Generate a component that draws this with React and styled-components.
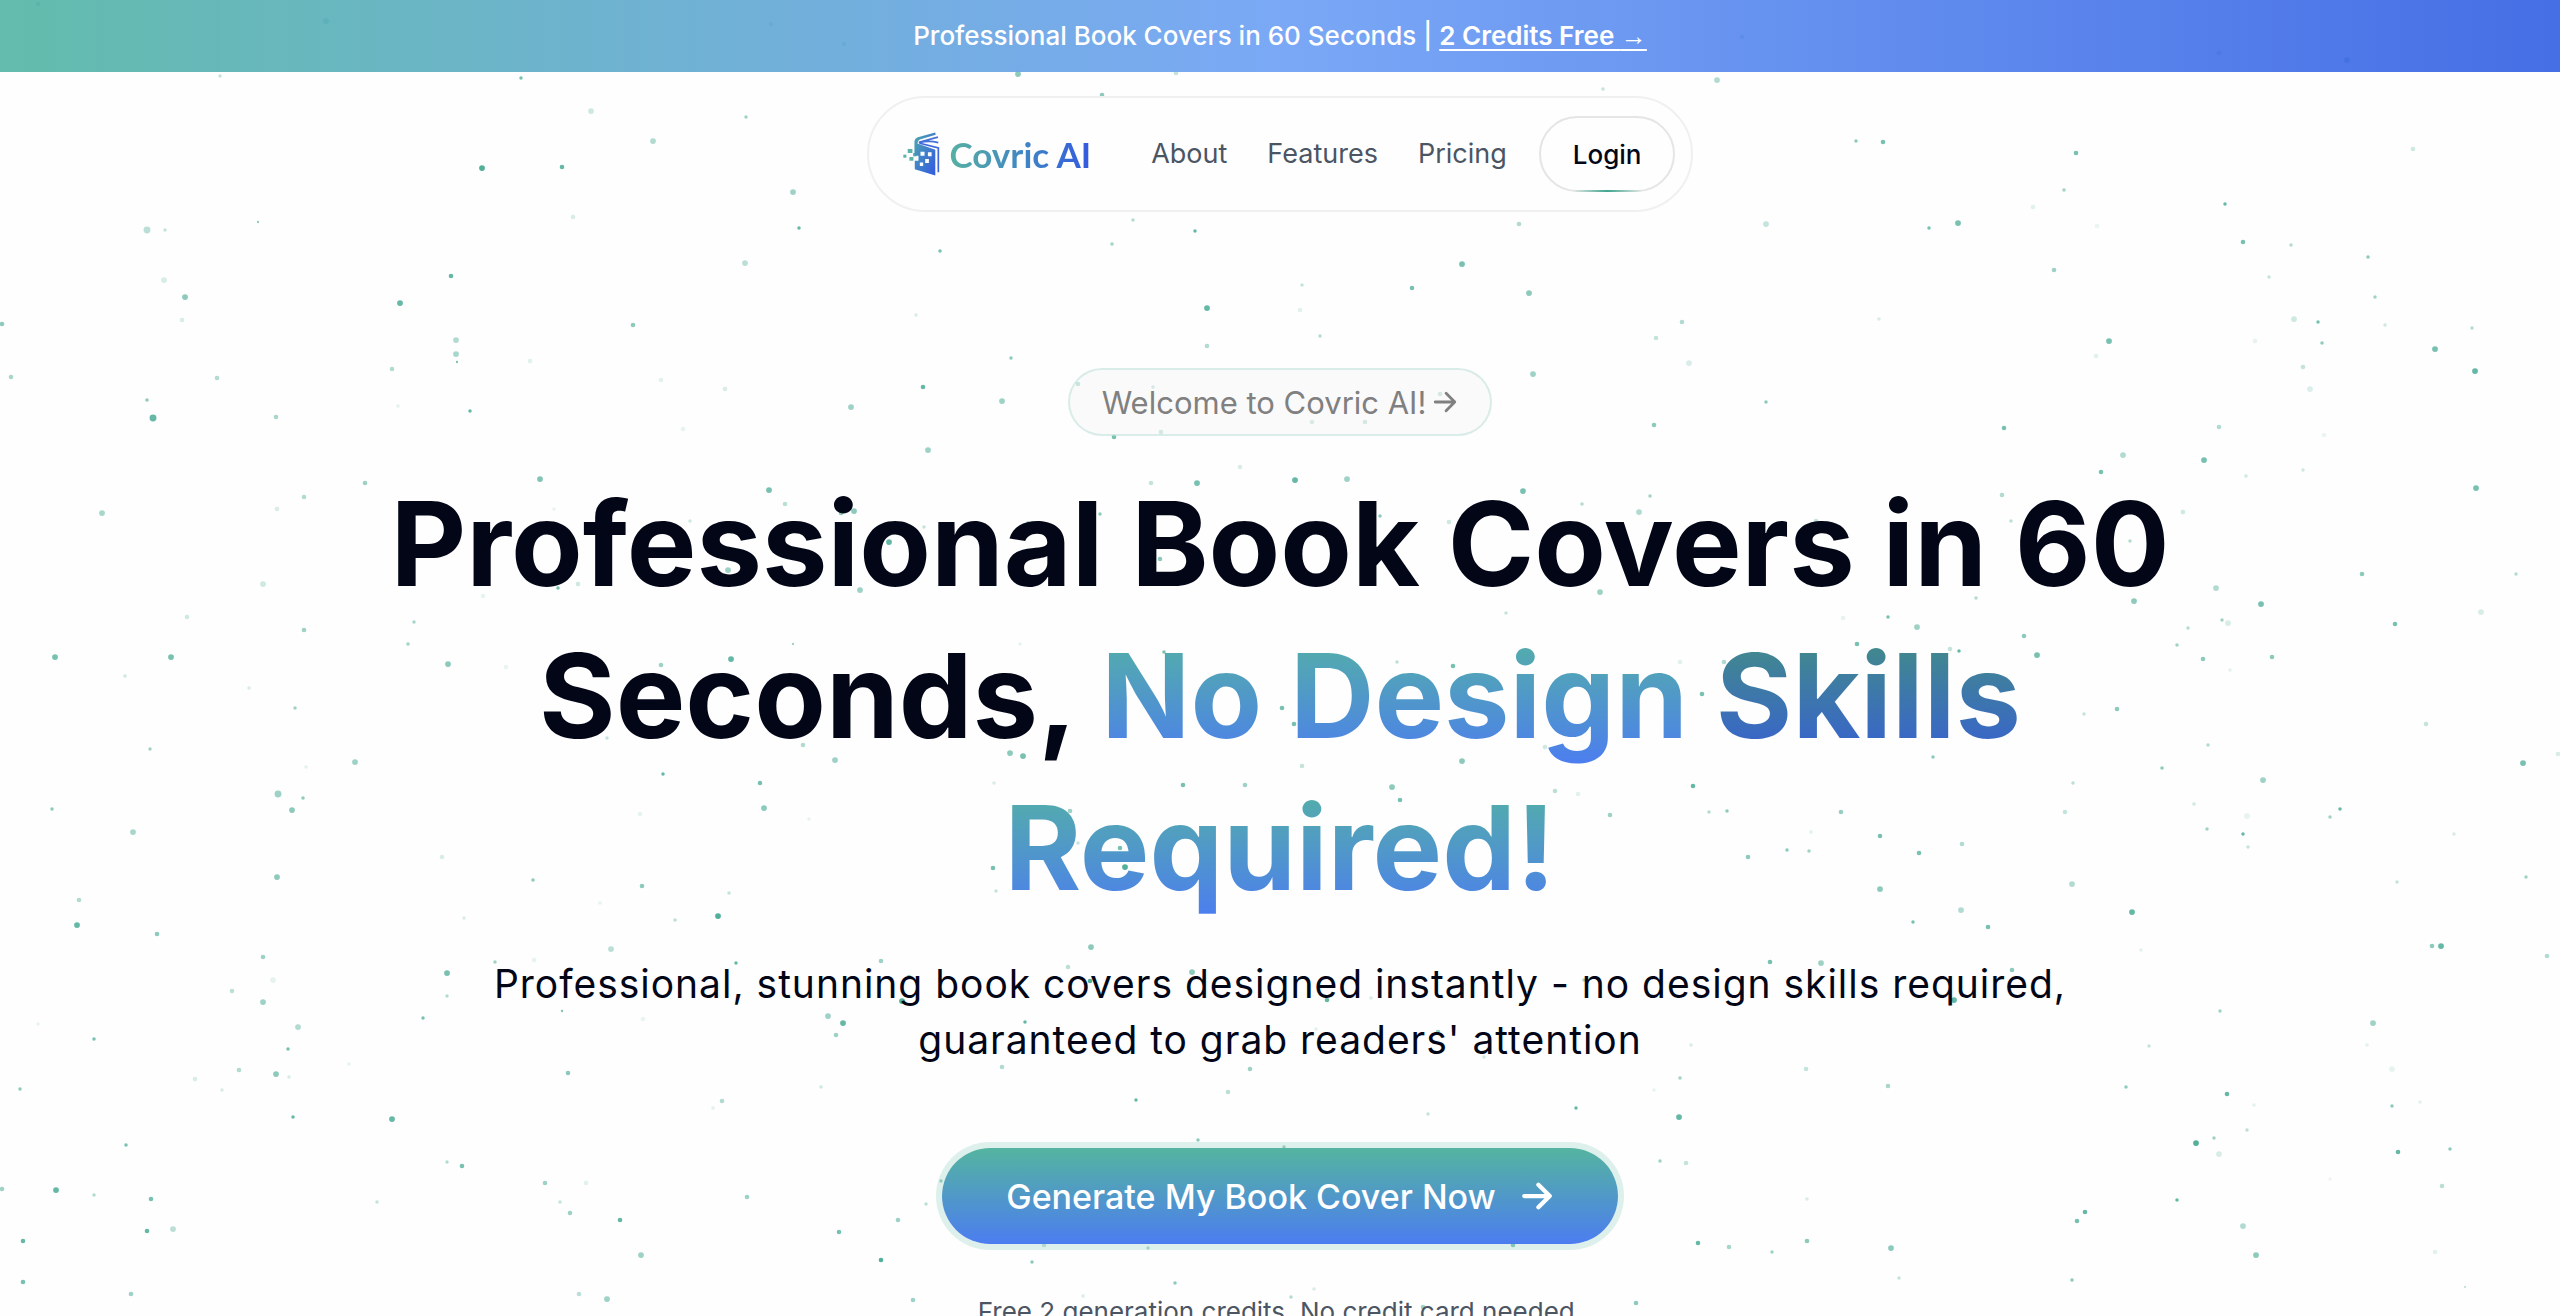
import React from "react";
import styled, { createGlobalStyle, ThemeProvider } from "styled-components";

const theme = {
  colors: {
    teal: "#54b4a0",
    blue: "#4c7df0",
    ink: "#020617",
    muted: "#4b5563",
    grey: "#808080",
    halo: "rgba(84, 180, 160, 0.19)",
  },
  breakpoints: {
    mobile: "640px",
    tablet: "1280px",
  },
};

const GlobalStyle = createGlobalStyle`
  * {
    box-sizing: border-box;
  }

  html {
    scrollbar-width: none;
  }

  body {
    margin: 0;
    background: #fefefe;
    font-family: Inter, "Liberation Sans", sans-serif;
    color: ${(props) => props.theme.colors.ink};
  }
`;

const Page = styled.div`
  position: relative;
  min-height: 100vh;
  overflow: hidden;
`;

const ParticleCanvas = styled.svg`
  position: absolute;
  inset: 0;
  width: 100%;
  height: 100%;
  fill: #3fa68f;
  pointer-events: none;
`;

const Banner = styled.div`
  position: relative;
  display: flex;
  justify-content: center;
  align-items: center;
  gap: 7px;
  min-height: 72px;
  padding: 16px;
  background: linear-gradient(
    to right,
    rgba(85, 182, 165, 0.92),
    rgba(111, 161, 245, 0.92),
    rgba(54, 98, 227, 0.92)
  );
  color: white;
  font-size: 26px;
  font-weight: 500;
  line-height: 40px;
`;

const BannerLink = styled.a`
  color: inherit;
  font-weight: 600;
  text-decoration: underline;
  text-decoration-thickness: 2px;
  text-underline-offset: 4px;
`;

const BannerArrow = styled.span`
  font-family: "Liberation Sans", sans-serif;
  font-weight: 400;
`;

const Header = styled.header`
  position: relative;
  display: flex;
  justify-content: center;
  padding: 24px 16px 0;
`;

const Nav = styled.nav`
  display: flex;
  align-items: center;
  padding: 18px 16px 18px 34px;
  border: 2px solid #f0f0f0;
  border-radius: 58px;
  background: #fefefe;
`;

const Logo = styled.a`
  display: flex;
  align-items: center;
  gap: 10px;
  margin-right: 60px;
  text-decoration: none;
`;

const LogoName = styled.span`
  font-family: Lato, "Liberation Sans", sans-serif;
  font-size: 35px;
  font-weight: 700;
  line-height: 40px;
  background: linear-gradient(to right, #56b0a2, #3e7fc8 60%, #3459e0);
  background-clip: text;
  color: transparent;
`;

const NavLinks = styled.div`
  display: flex;
  gap: 40px;
  margin-right: 32px;

  @media (max-width: ${(props) => props.theme.breakpoints.mobile}) {
    display: none;
  }
`;

const NavLink = styled.a`
  color: ${(props) => props.theme.colors.muted};
  font-size: 27px;
  line-height: 40px;
  text-decoration: none;
`;

const LoginButton = styled.button`
  position: relative;
  height: 76px;
  padding: 0 32px;
  border: 2px solid #e5e5e5;
  border-radius: 38px;
  background: transparent;
  color: ${(props) => props.theme.colors.ink};
  font-family: inherit;
  font-size: 26px;
  font-weight: 500;
  cursor: pointer;

  &::after {
    content: "";
    position: absolute;
    left: 24%;
    right: 24%;
    bottom: -2px;
    height: 2px;
    background: linear-gradient(to right, transparent, #3fa68f, transparent);
  }
`;

const Hero = styled.main`
  position: relative;
  display: flex;
  flex-direction: column;
  align-items: center;
  padding: 156px 32px 0;
  text-align: center;
`;

const WelcomeLink = styled.a`
  display: flex;
  align-items: center;
  gap: 6px;
  height: 68px;
  padding: 0 32px;
  border: 2px solid rgba(84, 180, 160, 0.2);
  border-radius: 34px;
  background: rgba(245, 245, 245, 0.5);
  color: ${(props) => props.theme.colors.grey};
  font-size: 31px;
  text-decoration: none;
`;

const Title = styled.h1`
  max-width: 1920px;
  margin: 32px 0 0;
  font-size: 117px;
  font-weight: 700;
  line-height: 152px;

  @media (max-width: ${(props) => props.theme.breakpoints.tablet}) {
    font-size: 60px;
    line-height: 76px;
  }
`;

const Highlight = styled.span`
  background: linear-gradient(
    to bottom,
    ${(props) => (props.$dark ? "#439080, #375ed6" : "#54b4a0, #4c7df0")}
  );
  background-clip: text;
  color: transparent;
`;

const Subtitle = styled.p`
  max-width: 1700px;
  margin: 32px 0 0;
  font-size: 39px;
  letter-spacing: 0.025em;
  line-height: 56px;

  @media (max-width: ${(props) => props.theme.breakpoints.tablet}) {
    font-size: 20px;
    line-height: 28px;
  }
`;

const GenerateButton = styled.button`
  display: flex;
  align-items: center;
  gap: 24px;
  height: 96px;
  margin-top: 80px;
  padding: 0 64px;
  border: 0;
  border-radius: 48px;
  background: linear-gradient(
    to bottom,
    ${(props) => props.theme.colors.teal},
    ${(props) => props.theme.colors.blue}
  );
  box-shadow: 0 0 0 6px ${(props) => props.theme.colors.halo};
  color: white;
  font-family: inherit;
  font-size: 34px;
  font-weight: 500;
  cursor: pointer;
`;

const Note = styled.p`
  margin: 48px 0 0;
  color: ${(props) => props.theme.colors.muted};
  font-size: 26px;
  line-height: 40px;
`;

// x, y, radius, opacity
const particles = [
  [38, 4, 2, 0.8], [326, 21, 2.5, 0.8], [771, 24, 2, 0.6], [844, 44, 2, 0.7],
  [1742, 37, 2, 0.8], [2219, 53, 2, 0.6], [2347, 60, 2.5, 0.8],
  [220, 76, 1.5, 0.3], [521, 78, 1.5, 0.7], [591, 111, 2.5, 0.25],
  [746, 117, 1.5, 0.5], [653, 141, 2.5, 0.4], [482, 168, 2.5, 0.9],
  [562, 167, 2, 0.8], [793, 192, 2.5, 0.5], [573, 217, 2, 0.2],
  [799, 228, 1.5, 0.8], [258, 222, 1, 0.6], [147, 230, 3, 0.35],
  [165, 230, 1.5, 0.3], [745, 263, 2.5, 0.35], [164, 280, 2.5, 0.2],
  [451, 276, 2, 0.8], [185, 297, 2.5, 0.6], [400, 303, 2.5, 0.8],
  [182, 320, 2, 0.2], [2, 324, 2, 0.6], [633, 325, 2, 0.6],
  [456, 340, 2.5, 0.4], [456, 354, 2.5, 0.45], [457, 362, 1, 0.7],
  [530, 361, 2, 0.15], [392, 369, 2, 0.4], [11, 377, 2, 0.45],
  [217, 378, 2, 0.4], [661, 380, 2, 0.15], [725, 389, 2, 0.2],
  [147, 400, 1.5, 0.6], [153, 418, 3, 0.8], [276, 417, 2, 0.45],
  [398, 406, 1.5, 0.15], [470, 411, 1.5, 0.8], [851, 407, 2.5, 0.5],
  [683, 429, 2, 0.12], [540, 479, 2.5, 0.65], [365, 483, 2, 0.5],
  [769, 490, 2.5, 0.7], [785, 504, 2, 0.35], [304, 497, 2, 0.4],
  [277, 509, 2, 0.2], [554, 509, 1.5, 0.12], [102, 513, 2.5, 0.45],
  [854, 511, 2.5, 0.6], [841, 513, 2, 0.6], [690, 521, 1.5, 0.25],
  [889, 542, 2.5, 0.8], [728, 570, 2.5, 0.5], [263, 584, 2.5, 0.25],
  [558, 588, 1.5, 0.7], [578, 584, 2, 0.25], [483, 596, 2, 0.12],
  [860, 590, 2.5, 0.5], [187, 617, 2, 0.25], [414, 622, 1.5, 0.45],
  [304, 630, 2, 0.5], [408, 644, 1.5, 0.5], [793, 644, 1, 0.5],
  [55, 657, 2.5, 0.7], [171, 657, 2.5, 0.7], [731, 659, 2.5, 0.8],
  [448, 664, 2.5, 0.6], [506, 667, 2, 0.1], [661, 665, 2, 0.5],
  [125, 676, 1.5, 0.25], [249, 688, 1.5, 0.2], [295, 708, 1.5, 0.5],
  [150, 749, 1.5, 0.5], [355, 762, 2.5, 0.5], [306, 767, 1.5, 0.15],
  [607, 738, 1.5, 0.3], [803, 745, 2, 0.4], [835, 760, 2.5, 0.5],
  [663, 774, 1.5, 0.8], [760, 783, 2, 0.7], [764, 808, 2.5, 0.6],
  [278, 794, 3, 0.5], [303, 798, 1.5, 0.6], [292, 810, 2.5, 0.6],
  [52, 809, 1.5, 0.6], [133, 832, 2.5, 0.45], [640, 814, 2, 0.12],
  [809, 819, 1.5, 0.12], [442, 857, 2, 0.2], [277, 877, 2.5, 0.6],
  [533, 880, 1.5, 0.6], [642, 886, 2, 0.6], [729, 893, 1.5, 0.3],
  [79, 900, 2, 0.4], [77, 925, 2.5, 0.8], [600, 903, 1.5, 0.12],
  [464, 918, 1.5, 0.2], [675, 920, 1.5, 0.35], [718, 916, 2.5, 0.9],
  [157, 934, 2, 0.6], [611, 949, 2.5, 0.35], [263, 957, 2, 0.5],
  [273, 980, 2.5, 0.12], [447, 973, 2.5, 0.7], [495, 962, 1.5, 0.5],
  [534, 960, 2, 0.12], [736, 963, 1.5, 0.8], [881, 961, 2, 0.5],
  [232, 991, 2, 0.35], [263, 1002, 2.5, 0.5], [447, 996, 1.5, 0.4],
  [562, 1011, 1, 0.7], [423, 1018, 1.5, 0.7], [38, 1024, 1.5, 0.12],
  [94, 1039, 1.5, 0.7], [298, 1027, 2.5, 0.4], [643, 1019, 2, 0.1],
  [828, 1016, 2.5, 0.5], [843, 1023, 2.5, 0.8], [836, 1035, 2, 0.5],
  [288, 1049, 1.5, 0.7], [349, 1064, 1.5, 0.12], [568, 1073, 2, 0.6],
  [239, 1070, 2, 0.4], [276, 1074, 2.5, 0.6], [289, 1077, 1.5, 0.2],
  [195, 1079, 2, 0.2], [222, 1090, 1.5, 0.2], [20, 1089, 1.5, 0.6],
  [722, 1101, 2, 0.4], [821, 1087, 1.5, 0.25], [713, 1108, 1.5, 0.15],
  [392, 1119, 2.5, 0.8], [293, 1117, 1.5, 0.8], [126, 1145, 1.5, 0.7],
  [447, 1162, 1.5, 0.4], [462, 1166, 2, 0.7], [545, 1183, 2, 0.5],
  [586, 1183, 2, 0.15], [2, 1189, 2, 0.5], [56, 1190, 2.5, 0.8],
  [94, 1195, 1.5, 0.4], [151, 1199, 2, 0.7], [377, 1202, 1.5, 0.3],
  [560, 1202, 1.5, 0.3], [747, 1197, 2, 0.5], [570, 1213, 2, 0.5],
  [620, 1220, 2, 0.8], [839, 1232, 2, 0.7], [898, 1220, 2, 0.5],
  [147, 1231, 2, 0.8], [173, 1229, 2.5, 0.35], [23, 1241, 2, 0.8],
  [641, 1255, 2.5, 0.5], [881, 1260, 2, 0.9], [23, 1282, 2, 0.7],
  [131, 1294, 2, 0.5], [579, 1294, 2, 0.35], [607, 1299, 2.5, 0.5],
  [1717, 80, 2.5, 0.4], [1856, 141, 1.5, 0.6], [1883, 142, 2, 0.7],
  [2076, 153, 2, 0.7], [2413, 149, 2, 0.25], [2064, 190, 1.5, 0.5],
  [2033, 207, 2, 0.15], [2225, 204, 1.5, 0.8], [1766, 224, 2.5, 0.3],
  [1929, 228, 1.5, 0.7], [1958, 223, 2.5, 0.7], [2097, 226, 2, 0.1],
  [2243, 242, 2, 0.7], [2291, 245, 1.5, 0.4], [2368, 257, 1.5, 0.6],
  [2054, 270, 2, 0.5], [2269, 277, 1.5, 0.3], [2375, 297, 1.5, 0.5],
  [1682, 322, 2, 0.4], [1879, 319, 1.5, 0.2], [2294, 319, 2.5, 0.25],
  [2318, 322, 1.5, 0.7], [2385, 325, 1.5, 0.25], [2472, 328, 1.5, 0.4],
  [2109, 341, 2.5, 0.7], [2255, 341, 2, 0.12], [2322, 343, 1.5, 0.6],
  [2435, 349, 2.5, 0.7], [1689, 363, 2.5, 0.2], [2096, 356, 2, 0.15],
  [2303, 367, 2, 0.3], [2475, 371, 2.5, 0.8], [2310, 389, 2.5, 0.18],
  [1766, 402, 1.5, 0.6], [2004, 428, 2, 0.7], [2219, 427, 2, 0.4],
  [2324, 435, 2, 0.1], [2123, 455, 2.5, 0.4], [2101, 472, 2, 0.7],
  [2204, 460, 2.5, 0.7], [2303, 470, 1.5, 0.25], [2246, 476, 1.5, 0.25],
  [2476, 488, 2.5, 0.7], [2002, 495, 2, 0.4], [2011, 521, 1.5, 0.35],
  [2183, 512, 2, 0.25], [1816, 521, 2, 0.3], [2130, 541, 1.5, 0.4],
  [2362, 574, 2, 0.6], [2516, 574, 1.5, 0.4], [2216, 588, 2.5, 0.4],
  [2134, 601, 2.5, 0.6], [2261, 604, 2.5, 0.7], [1976, 598, 1.5, 0.4],
  [1888, 617, 1.5, 0.7], [1843, 618, 2, 0.12], [1917, 627, 2.5, 0.5],
  [2222, 620, 1.5, 0.5], [2228, 623, 2.5, 0.2], [2481, 612, 2.5, 0.2],
  [2395, 624, 2, 0.7], [2188, 628, 1.5, 0.4], [1857, 644, 2, 0.7],
  [2024, 636, 2, 0.6], [2177, 645, 1.5, 0.5], [1950, 649, 2, 0.3],
  [1959, 651, 1.5, 0.8], [2037, 655, 2.5, 0.7], [2272, 657, 2, 0.6],
  [2203, 659, 2, 0.6], [1724, 662, 2, 0.4], [1680, 662, 2, 0.15],
  [2230, 670, 1.5, 0.15], [1702, 694, 2, 0.7], [2117, 709, 2, 0.6],
  [2084, 714, 1.5, 0.3], [2426, 724, 2, 0.3], [2208, 745, 1.5, 0.4],
  [2162, 768, 1.5, 0.6], [1933, 757, 1.5, 0.6], [2523, 763, 2.5, 0.7],
  [2558, 754, 2, 0.2], [2263, 780, 2.5, 0.5], [2073, 783, 1.5, 0.35],
  [1693, 786, 2, 0.8], [2194, 804, 1.5, 0.25], [2340, 809, 1.5, 0.8],
  [1709, 812, 1.5, 0.4], [1727, 811, 1.5, 0.6], [1841, 812, 2, 0.55],
  [2065, 812, 2, 0.3], [2247, 816, 2.5, 0.12], [2330, 817, 1.5, 0.5],
  [2207, 829, 1.5, 0.5], [2243, 834, 1.5, 0.8], [2454, 834, 1.5, 0.2],
  [1811, 832, 1.5, 0.15], [1880, 836, 2, 0.7], [1787, 850, 1.5, 0.6],
  [1809, 851, 1.5, 0.5], [1962, 844, 2, 0.4], [1919, 853, 2, 0.7],
  [1748, 857, 2, 0.6], [2248, 847, 1.5, 0.3], [2072, 884, 2.5, 0.4],
  [1880, 889, 2.5, 0.6], [2397, 882, 1.5, 0.3], [2526, 877, 1.5, 0.5],
  [1961, 910, 2.5, 0.4], [2132, 912, 2.5, 0.8], [1913, 922, 1.5, 0.7],
  [1988, 927, 2, 0.7], [2432, 946, 2, 0.6], [2441, 946, 2.5, 0.8],
  [2547, 956, 2, 0.4], [2141, 950, 1.5, 0.15], [1770, 962, 2, 0.7],
  [1821, 963, 2.5, 0.5], [2012, 970, 2, 0.6], [1954, 1000, 2.5, 0.8],
  [2220, 1011, 1.5, 0.5], [2373, 1023, 2.5, 0.5], [2149, 1046, 1.5, 0.3],
  [2367, 1045, 1.5, 0.15], [1691, 1045, 1.5, 0.2], [1806, 1069, 2, 0.3],
  [2392, 1069, 2.5, 0.12], [1888, 1086, 2, 0.45], [1680, 1078, 1.5, 0.5],
  [2126, 1087, 1.5, 0.6], [2227, 1094, 2, 0.8], [1679, 1117, 2.5, 0.8],
  [2254, 1105, 1.5, 0.15], [2392, 1106, 1.5, 0.6], [2420, 1102, 1.5, 0.15],
  [2247, 1130, 1.5, 0.35], [2196, 1143, 2.5, 0.9], [2214, 1138, 1.5, 0.5],
  [2219, 1154, 2.5, 0.2], [2398, 1152, 2, 0.8], [2450, 1149, 1.5, 0.6],
  [1686, 1163, 2, 0.3], [1660, 1161, 1.5, 0.5], [2442, 1186, 2, 0.35],
  [2330, 1179, 1.5, 0.1], [1807, 1199, 1.5, 0.2], [2177, 1200, 1.5, 0.8],
  [2085, 1212, 2, 0.8], [2077, 1221, 2, 0.7], [2243, 1226, 2.5, 0.4],
  [1698, 1243, 2, 0.8], [1729, 1247, 2, 0.45], [1772, 1252, 1.5, 0.5],
  [1807, 1241, 2, 0.6], [1891, 1248, 2.5, 0.6], [2256, 1255, 2.5, 0.6],
  [2435, 1252, 2, 0.15], [1899, 1278, 1.5, 0.3], [2072, 1280, 1.5, 0.6],
  [2465, 1287, 1, 0.3], [1018, 74, 2.5, 0.6], [1176, 73, 2, 0.3],
  [1102, 95, 2, 0.6], [1603, 89, 1.5, 0.3], [1133, 220, 1.5, 0.4],
  [1195, 231, 1.5, 0.8], [1112, 244, 1.5, 0.5], [940, 251, 1.5, 0.7],
  [1519, 224, 2, 0.4], [1462, 264, 2.5, 0.7], [1302, 285, 1.5, 0.3],
  [1412, 288, 2, 0.7], [1300, 310, 2, 0.15], [1207, 308, 2.5, 0.8],
  [1529, 293, 2.5, 0.6], [916, 315, 1.5, 0.2], [1320, 336, 1.5, 0.4],
  [1207, 346, 2, 0.4], [1656, 338, 2, 0.3], [1011, 358, 1.5, 0.6],
  [923, 387, 2, 0.8], [1002, 401, 2.5, 0.5], [1533, 374, 2.5, 0.5],
  [1654, 425, 2, 0.6], [1114, 437, 2, 0.7], [1161, 432, 2, 0.4],
  [1078, 384, 2, 0.5], [1153, 387, 1.5, 0.4], [1312, 422, 2, 0.35],
  [1365, 422, 2, 0.4], [1440, 394, 2, 0.4], [928, 450, 2.5, 0.5],
  [1240, 467, 2, 0.2], [1295, 480, 2.5, 0.8], [1347, 479, 2.5, 0.5],
  [1197, 483, 2.5, 0.7], [1151, 483, 2, 0.3], [924, 527, 1.5, 0.3],
  [1028, 523, 1.5, 0.7], [1100, 514, 1.5, 0.6], [1160, 559, 2, 0.6],
  [1010, 753, 2.5, 0.6], [1023, 756, 2.5, 0.7], [960, 698, 2, 0.6],
  [1183, 785, 2, 0.7], [1245, 785, 2, 0.5], [994, 783, 1.5, 0.2],
  [1070, 811, 2, 0.5], [1078, 843, 1.5, 0.3], [1120, 848, 2, 0.7],
  [1125, 867, 2.5, 0.9], [993, 868, 2, 0.7], [996, 891, 1.5, 0.3],
  [1091, 947, 2.5, 0.6], [1164, 652, 1.5, 0.7], [1020, 644, 1.5, 0.12],
  [1380, 516, 1.5, 0.6], [1523, 491, 2.5, 0.7], [1449, 522, 2, 0.25],
  [1582, 504, 1.5, 0.4], [1650, 496, 1.5, 0.5], [1639, 512, 2.5, 0.4],
  [1600, 592, 2.5, 0.5], [1506, 613, 1.5, 0.3], [1397, 662, 1.5, 0.35],
  [1453, 666, 2, 0.7], [1282, 708, 2, 0.7], [1294, 724, 2, 0.7],
  [1545, 747, 2, 0.25], [1462, 761, 2.5, 0.6], [1302, 766, 2, 0.3],
  [1392, 787, 2.5, 0.6], [1400, 800, 2, 0.7], [1555, 791, 2, 0.35],
  [1578, 794, 2, 0.15], [1610, 815, 2, 0.5], [1530, 876, 1.5, 0.7],
  [1068, 967, 2, 0.35], [1192, 972, 2.5, 0.6], [1025, 1022, 1.5, 0.8],
  [1002, 1067, 2, 0.4], [1250, 1069, 2, 0.5], [1228, 1092, 2, 0.35],
  [1136, 1100, 1.5, 0.8], [1198, 1140, 1.5, 0.6], [1284, 1147, 1.5, 0.5],
  [926, 1204, 1.5, 0.35], [941, 1181, 1.5, 0.5], [909, 977, 2, 0.6],
  [902, 1001, 2.5, 0.9], [1090, 981, 2, 0.9], [913, 1300, 2, 0.5],
  [1032, 1262, 1.5, 0.6], [1148, 1248, 1.5, 0.4], [1044, 1245, 2, 0.3],
  [1175, 1283, 1.5, 0.6], [1291, 1297, 1.5, 0.4], [1314, 1289, 1.5, 0.2],
  [1083, 1296, 1.5, 0.2], [1327, 1000, 2, 0.8], [1371, 998, 1.5, 0.2],
  [1438, 1032, 2, 0.6], [1584, 980, 1.5, 0.5], [1316, 1029, 1.5, 0.15],
  [1484, 1057, 1.5, 0.25], [1428, 1114, 1.5, 0.3], [1576, 1108, 1.5, 0.8],
  [1654, 1090, 1.5, 0.12], [1513, 1245, 2, 0.6], [1636, 1303, 2, 0.6],
  [1423, 1307, 2, 0.5], [1518, 1308, 2, 0.5],
];

const PARTICLE_SCALE = 1.15;

const Particles = () => (
  <ParticleCanvas aria-hidden="true">
    {particles.map(([x, y, r, opacity]) => (
      <circle
        key={`${x}-${y}`}
        cx={x}
        cy={y}
        r={r * PARTICLE_SCALE}
        opacity={opacity}
      />
    ))}
  </ParticleCanvas>
);

const BookIcon = () => (
  <svg width="37" height="44" viewBox="0 0 110 130" aria-hidden="true">
    <defs>
      <linearGradient id="book" x1="0" y1="0" x2="1" y2="1">
        <stop offset="0" stopColor="#4fa9a8" />
        <stop offset="0.5" stopColor="#3f7fcb" />
        <stop offset="1" stopColor="#3459e0" />
      </linearGradient>
    </defs>
    <g fill="#5bb3ab">
      <rect x="14" y="50" width="14" height="12" />
      <rect x="1" y="67" width="9" height="9" />
      <rect x="19" y="74" width="12" height="11" />
      <rect x="30" y="62" width="10" height="10" />
    </g>
    <path
      fill="url(#book)"
      fillRule="evenodd"
      d="M34 26 Q35 18 44 15 L96 1 L97 8 L50 22 Q43 25 43 34 L96 52 V129 L35 110 V85 H46 V70 H34 Z M52 58 V70 H64 V58 Z M74 60 V72 H85 V60 Z M66 80 V92 H77 V80 Z M50 90 V101 H60 V90 Z"
    />
    <path
      fill="none"
      stroke="#4471d8"
      strokeWidth="5"
      d="M47 30 L104 15 M47 32 Q75 24 105 31"
    />
    <path
      fill="none"
      stroke="#3f66dc"
      strokeWidth="5"
      d="M50 33 L105 47 V119"
    />
  </svg>
);

const ArrowIcon = ({ size, stroke }) => (
  <svg
    width={size}
    height={size}
    viewBox="0 0 24 24"
    fill="none"
    stroke="currentColor"
    strokeWidth={stroke}
    strokeLinecap="round"
    strokeLinejoin="round"
    aria-hidden="true"
  >
    <path d="M3 12h18M13 4l8 8-8 8" />
  </svg>
);

const App = () => {
  return (
    <ThemeProvider theme={theme}>
      <GlobalStyle />
      <Page>
        <Particles />
        <Banner>
          <span>Professional Book Covers in 60 Seconds |</span>
          <BannerLink href="#pricing">
            2 Credits Free <BannerArrow>→</BannerArrow>
          </BannerLink>
        </Banner>
        <Header>
          <Nav>
            <Logo href="#">
              <BookIcon />
              <LogoName>Covric AI</LogoName>
            </Logo>
            <NavLinks>
              <NavLink href="#about">About</NavLink>
              <NavLink href="#features">Features</NavLink>
              <NavLink href="#pricing">Pricing</NavLink>
            </NavLinks>
            <LoginButton type="button">Login</LoginButton>
          </Nav>
        </Header>
        <Hero>
          <WelcomeLink href="#welcome">
            Welcome to Covric AI!
            <ArrowIcon size={26} stroke={2.6} />
          </WelcomeLink>
          <Title>
            Professional Book Covers in 60 Seconds,{" "}
            <Highlight>No Design</Highlight>{" "}
            <Highlight $dark>Skills</Highlight>{" "}
            <Highlight>Required!</Highlight>
          </Title>
          <Subtitle>
            Professional, stunning book covers designed instantly - no design
            skills required, guaranteed to grab readers' attention
          </Subtitle>
          <GenerateButton type="button">
            Generate My Book Cover Now
            <ArrowIcon size={34} stroke={3} />
          </GenerateButton>
          <Note>Free 2 generation credits. No credit card needed.</Note>
        </Hero>
      </Page>
    </ThemeProvider>
  );
};

export default App;
